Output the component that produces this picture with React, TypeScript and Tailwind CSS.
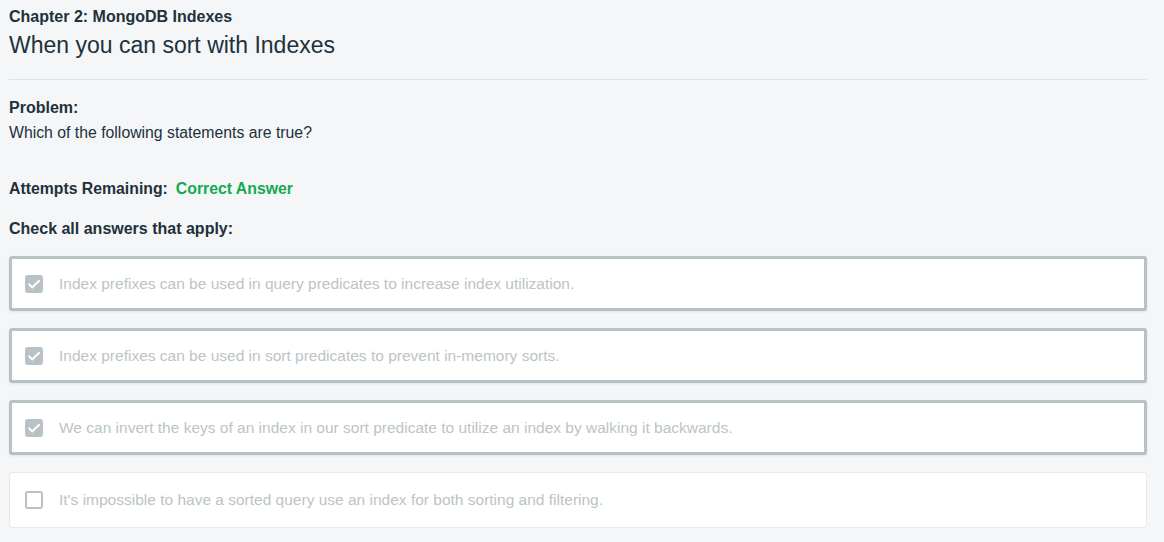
const answers = [
  { text: 'Index prefixes can be used in query predicates to increase index utilization.', checked: true },
  { text: 'Index prefixes can be used in sort predicates to prevent in-memory sorts.', checked: true },
  {
    text: 'We can invert the keys of an index in our sort predicate to utilize an index by walking it backwards.',
    checked: true,
  },
  { text: "It's impossible to have a sorted query use an index for both sorting and filtering.", checked: false },
]

function CheckBox({ checked }: { checked: boolean }) {
  if (checked) {
    return (
      <span className="flex h-[18px] w-[18px] shrink-0 items-center justify-center rounded-[3px] bg-[#b8c1c6]">
        <svg viewBox="0 0 16 16" className="h-[14px] w-[14px]" fill="none">
          <path d="M2.4 8.4l3.6 3.6L13.8 4.2" stroke="#ffffff" strokeWidth="2.3" strokeLinecap="round" strokeLinejoin="round" />
        </svg>
      </span>
    )
  }
  return <span className="h-[18px] w-[18px] shrink-0 rounded-[3px] border-2 border-[#b8c1c6] bg-white" />
}

export default function App() {
  return (
    <div className="min-h-[542px] bg-[#f5f6f7] px-[9px] pt-[7px] font-['Liberation_Sans',Arial,sans-serif] text-[#21313c]">
      <div className="w-[1138px]">
        <h4 className="text-[16px] font-bold leading-[20px]">Chapter 2: MongoDB Indexes</h4>
        <h1 className="mt-[4px] text-[23px] font-light leading-[28px]">When you can sort with Indexes</h1>
        <hr className="mt-[20px] border-t border-[#dde2e4]" />

        <h5 className="mt-[18px] text-[16px] font-bold leading-[20px]">Problem:</h5>
        <p className="mt-[5px] text-[15.8px] leading-[20px]">Which of the following statements are true?</p>

        <div className="mt-[36px] flex gap-[8px] text-[15.8px] font-bold leading-[20px]">
          <span>Attempts Remaining:</span>
          <span className="text-[#13aa52]">Correct Answer</span>
        </div>

        <h5 className="mt-[20px] text-[16px] font-bold leading-[20px]">Check all answers that apply:</h5>

        <div className="mt-[17px] flex flex-col gap-[17px]">
          {answers.map((a) =>
            a.checked ? (
              <label
                key={a.text}
                className="flex h-[55px] items-center gap-[16px] rounded-[3px] border-[3px] border-[#b8c1c6] bg-white pl-[13px] shadow-[0_1px_3px_rgba(0,0,0,0.08)]"
              >
                <CheckBox checked />
                <span className="text-[15.5px] text-[#bcc4c6]">{a.text}</span>
              </label>
            ) : (
              <label
                key={a.text}
                className="flex h-[56px] items-center gap-[16px] rounded-[3px] border border-[#e7eaec] bg-white pl-[15px]"
              >
                <CheckBox checked={false} />
                <span className="text-[15.5px] text-[#bcc4c6]">{a.text}</span>
              </label>
            ),
          )}
        </div>
      </div>
    </div>
  )
}
